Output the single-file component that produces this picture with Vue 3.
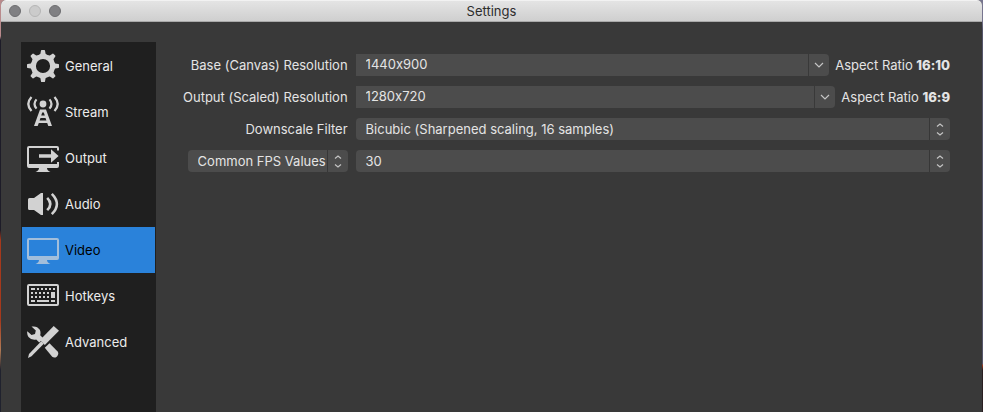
<script setup>
import { ref } from 'vue'

const sections = ['General', 'Stream', 'Output', 'Audio', 'Video', 'Hotkeys', 'Advanced']
const current = ref('Video')

const base = ref('1440x900')
const output = ref('1280x720')
const filter = ref('Bicubic (Sharpened scaling, 16 samples)')
const fpsType = ref('Common FPS Values')
const fps = ref('30')

const gearTeeth = [0, 45, 90, 135, 180, 225, 270, 315]

// x, y and width of each key cap
const keys = [
  [4, 8, 4], [10, 8, 2], [14, 8, 2], [18, 8, 2], [22, 8, 2], [26, 8, 2],
  [4, 12, 2], [8, 12, 2], [12, 12, 2], [16, 12, 2], [20, 12, 2],
  [4, 16, 2], [8, 16, 2], [12, 16, 2], [16, 16, 2], [20, 16, 2],
  [4, 20, 4], [10, 20, 12], [24, 20, 4]
]
</script>

<template>
  <div class="window">
    <header class="titlebar">
      <div class="lights">
        <button class="light" type="button" aria-label="Close"></button>
        <button class="light off" type="button" aria-label="Minimize" disabled></button>
        <button class="light" type="button" aria-label="Zoom"></button>
      </div>
      <h1 class="title">Settings</h1>
    </header>

    <div class="body">
      <nav class="sidebar">
        <button
          v-for="name in sections"
          :key="name"
          type="button"
          class="item"
          :class="{ active: current === name }"
          @click="current = name"
        >
          <svg class="icon" viewBox="0 0 32 32" aria-hidden="true">
            <g v-if="name === 'General'">
              <circle cx="16" cy="16" r="9.6" fill="none" stroke="currentColor" stroke-width="5" />
              <path
                v-for="a in gearTeeth"
                :key="a"
                d="M11.6 5.5 L13.4 3.8 L14 0.6 Q14.100 0 14.700 0 H17.300 Q17.900 0 18 0.600 L18.600 3.800 L20.400 5.500 Z"
                fill="currentColor"
                :transform="`rotate(${a} 16 16)`"
              />
            </g>
            <g v-else-if="name === 'Stream'" fill="none" stroke="currentColor">
              <circle cx="16" cy="8" r="3.4" fill="currentColor" stroke="none" />
              <path d="M9.5 3.4 Q5.5 8 9.5 12.6 M22.5 3.4 Q26.5 8 22.5 12.6" stroke-width="2.2" />
              <path d="M4.5 1 Q-1.900 8 4.500 15 M27.500 1 Q33.900 8 27.500 15" stroke-width="2.300" />
              <path d="M13 13.400 H19 L25 30 H21.300 L20.200 27 H11.800 L10.700 30 H7 Z M15.200 16.500 L14.200 19.500 H17.800 L16.800 16.500 Z M13.500 22 L12.600 24.500 H19.400 L18.500 22 Z" fill="currentColor" fill-rule="evenodd" stroke="none" />
            </g>
            <g v-else-if="name === 'Output'" fill="currentColor">
              <path d="M2 4 H30 Q32 4 32 6 V8.5 H30 V6 H2 V22 H30 V20 H32 V24 Q32 26 30 26 H2 Q0 26 0 24 V6 Q0 4 2 4 Z" />
              <path d="M12 26 H20 Q20 28.5 23.5 30 H8.5 Q12 28.5 12 26 Z" />
              <path d="M12 12.200 H24 V7.300 L31.600 14 L24 20.700 V15.800 H12 Z" />
            </g>
            <g v-else-if="name === 'Audio'">
              <path d="M1 11.500 Q1 10 2.500 10 H7 L14 5 H16 V27 H14 L7 22 H2.500 Q1 22 1 20.500 Z" fill="currentColor" />
              <path d="M20.200 9.800 Q26.400 16 20.200 22.200 M24.800 5.800 Q35 16 24.800 26.200" fill="none" stroke="currentColor" stroke-width="2.600" />
            </g>
            <g v-else-if="name === 'Video'" fill="currentColor">
              <path d="M2 4 H30 Q32 4 32 6 V24 Q32 26 30 26 H2 Q0 26 0 24 V6 Q0 4 2 4 Z M2 6 V22 H30 V6 Z" fill-rule="evenodd" />
              <path d="M12 26 H20 Q20 28.5 23.5 30 H8.5 Q12 28.5 12 26 Z" />
            </g>
            <g v-else-if="name === 'Hotkeys'">
              <rect x="1" y="5" width="30" height="20" rx="1" fill="none" stroke="currentColor" stroke-width="2" />
              <rect v-for="(k, i) in keys" :key="i" :x="k[0]" :y="k[1]" :width="k[2]" height="2" fill="currentColor" />
              <rect x="24" y="12" width="4" height="6" fill="currentColor" />
            </g>
            <g v-else fill="currentColor">
              <path d="M4.5 0.600 Q10 -0.500 12.800 3.800 Q14 6.500 13.200 9.200 L16.500 12.400 L12.300 16.400 L9.200 13.600 Q4.500 14.500 1.500 11 Q-0.300 8.500 0.300 5.300 L4.500 9 L8 8 L8.800 4.500 Z" />
              <path d="M17.800 21.800 L22.500 17.200 L30.600 25.400 Q32.200 28 30 30.400 Q27.500 32.600 25.200 30.800 Z" />
              <path d="M26.700 0 L32 4.800 L17.800 19 L13 14 Z" />
              <path d="M14.200 15.200 L16.800 17.800 L4.500 30.200 L1 32 L2 28 Z" />
            </g>
          </svg>
          <span>{{ name }}</span>
        </button>
      </nav>

      <form class="form" @submit.prevent>
        <label class="label" for="base">Base (Canvas) Resolution</label>
        <div class="line">
          <div class="combo">
            <input id="base" v-model="base" class="entry" type="text" />
            <button class="drop" type="button" aria-label="Choose base resolution">
              <svg class="glyph" viewBox="0 0 20 22"><path d="M6 9 L10 13 L14 9" /></svg>
            </button>
          </div>
          <span class="ratio">Aspect Ratio <b>16:10</b></span>
        </div>

        <label class="label" for="output">Output (Scaled) Resolution</label>
        <div class="line">
          <div class="combo">
            <input id="output" v-model="output" class="entry" type="text" />
            <button class="drop" type="button" aria-label="Choose output resolution">
              <svg class="glyph" viewBox="0 0 20 22"><path d="M6 9 L10 13 L14 9" /></svg>
            </button>
          </div>
          <span class="ratio">Aspect Ratio <b>16:9</b></span>
        </div>

        <label class="label" for="filter">Downscale Filter</label>
        <div class="picker">
          <select id="filter" v-model="filter" class="select">
            <option>Bicubic (Sharpened scaling, 16 samples)</option>
          </select>
          <span class="stepper">
            <svg class="glyph" viewBox="0 0 20 22"><path d="M7 8.5 L10 6 L13 8.5 M7 14.5 L10 17 L13 14.5" /></svg>
          </span>
        </div>

        <div class="picker type">
          <select v-model="fpsType" class="select" aria-label="FPS type">
            <option>Common FPS Values</option>
          </select>
          <span class="stepper">
            <svg class="glyph" viewBox="0 0 20 22"><path d="M7 8.5 L10 6 L13 8.5 M7 14.5 L10 17 L13 14.5" /></svg>
          </span>
        </div>
        <div class="picker">
          <select v-model="fps" class="select" aria-label="FPS">
            <option>30</option>
          </select>
          <span class="stepper">
            <svg class="glyph" viewBox="0 0 20 22"><path d="M7 8.5 L10 6 L13 8.5 M7 14.5 L10 17 L13 14.5" /></svg>
          </span>
        </div>
      </form>
    </div>
  </div>
</template>

<style>
body {
  margin: 0;
  background:
    linear-gradient(#b98a8c 0 36px, #1d1c28 40px 230px, #a5391c 240px 320px, #b07a55 350px, #20222e 370px) left / 50% 100% no-repeat,
    linear-gradient(#77758f 0 20px, #55556a 30px 364px, #a5391c 365px, #2a1f22 370px) right / 50% 100% no-repeat;
}
</style>

<style scoped>
.window {
  display: flex;
  flex-direction: column;
  min-height: 100vh;
  margin: 0 1px;
  border-radius: 5px 5px 0 0;
  overflow: hidden;
  background: #393939;
  color: #e4e4e4;
  font-family: Inter, "Liberation Sans", sans-serif;
  font-size: 13px;
  font-feature-settings: "calt" 0;
  line-height: 22px;
}

.titlebar {
  display: grid;
  grid-template-columns: 1fr auto 1fr;
  align-items: center;
  height: 22px;
  box-sizing: border-box;
  border-top: 1px solid #f2f2f2;
  border-bottom: 1px solid #a9a9a9;
  background: linear-gradient(#e4e4e4, #cfcfcf);
}

.lights {
  display: flex;
  gap: 8px;
  padding-left: 8px;
}

.light {
  width: 12px;
  height: 12px;
  padding: 0;
  box-sizing: border-box;
  border: 1px solid #6d6d70;
  border-radius: 50%;
  background: #808083;
}

.light.off {
  border-color: #b5b5b5;
  background: #cbcbcb;
}

.title {
  margin: 0;
  color: #2d2d2d;
  font-size: 13px;
  font-weight: 400;
  line-height: 20px;
}

.body {
  display: flex;
  flex: 1;
  gap: 27px;
  padding: 20px 32px 0 20px;
}

.sidebar {
  display: flex;
  flex-direction: column;
  flex: none;
  width: 135px;
  box-sizing: border-box;
  padding: 1px;
  background: #1f1f1f;
}

.item {
  display: flex;
  align-items: center;
  gap: 6px;
  height: 46px;
  padding: 0 5px;
  border: 0;
  background: none;
  color: #ececec;
  font: inherit;
  text-align: left;
}

.item.active {
  background: #2a82da;
  color: #000;
}

.icon {
  width: 32px;
  height: 32px;
  flex: none;
  color: #d2d2d2;
}

.active .icon {
  color: #a2bedb;
}

.form {
  display: grid;
  flex: 1;
  grid-template-columns: auto 1fr;
  align-content: start;
  gap: 10px 8px;
  padding-top: 12px;
}

.label {
  text-align: right;
}

.line {
  display: flex;
  gap: 6px;
}

.combo {
  display: flex;
  flex: 1;
  gap: 1px;
}

.entry {
  flex: 1;
  min-width: 0;
  height: 22px;
  box-sizing: border-box;
  padding: 0 10px 2px;
  border: 0;
  background: #4c4c4c;
  color: inherit;
  font: inherit;
  font-feature-settings: inherit;
}

.drop {
  display: flex;
  width: 20px;
  height: 22px;
  padding: 0;
  border: 0;
  border-radius: 0 4px 4px 0;
  background: #4c4c4c;
  color: inherit;
}

.ratio {
  white-space: nowrap;
}

.ratio b {
  font-weight: 800;
}

.picker {
  display: grid;
}

.picker.type {
  justify-self: end;
  width: 160px;
}

.select {
  grid-area: 1 / 1;
  width: 100%;
  height: 22px;
  box-sizing: border-box;
  padding: 0 21px 0 10px;
  border: 0;
  border-radius: 4px;
  appearance: none;
  background: #4c4c4c;
  color: inherit;
  font: inherit;
}

.stepper {
  grid-area: 1 / 1;
  justify-self: end;
  display: flex;
  border-left: 1px solid #373737;
  pointer-events: none;
}

.glyph {
  width: 20px;
  height: 22px;
  fill: none;
  stroke: #c4c4c4;
  stroke-width: 1.2;
}
</style>
